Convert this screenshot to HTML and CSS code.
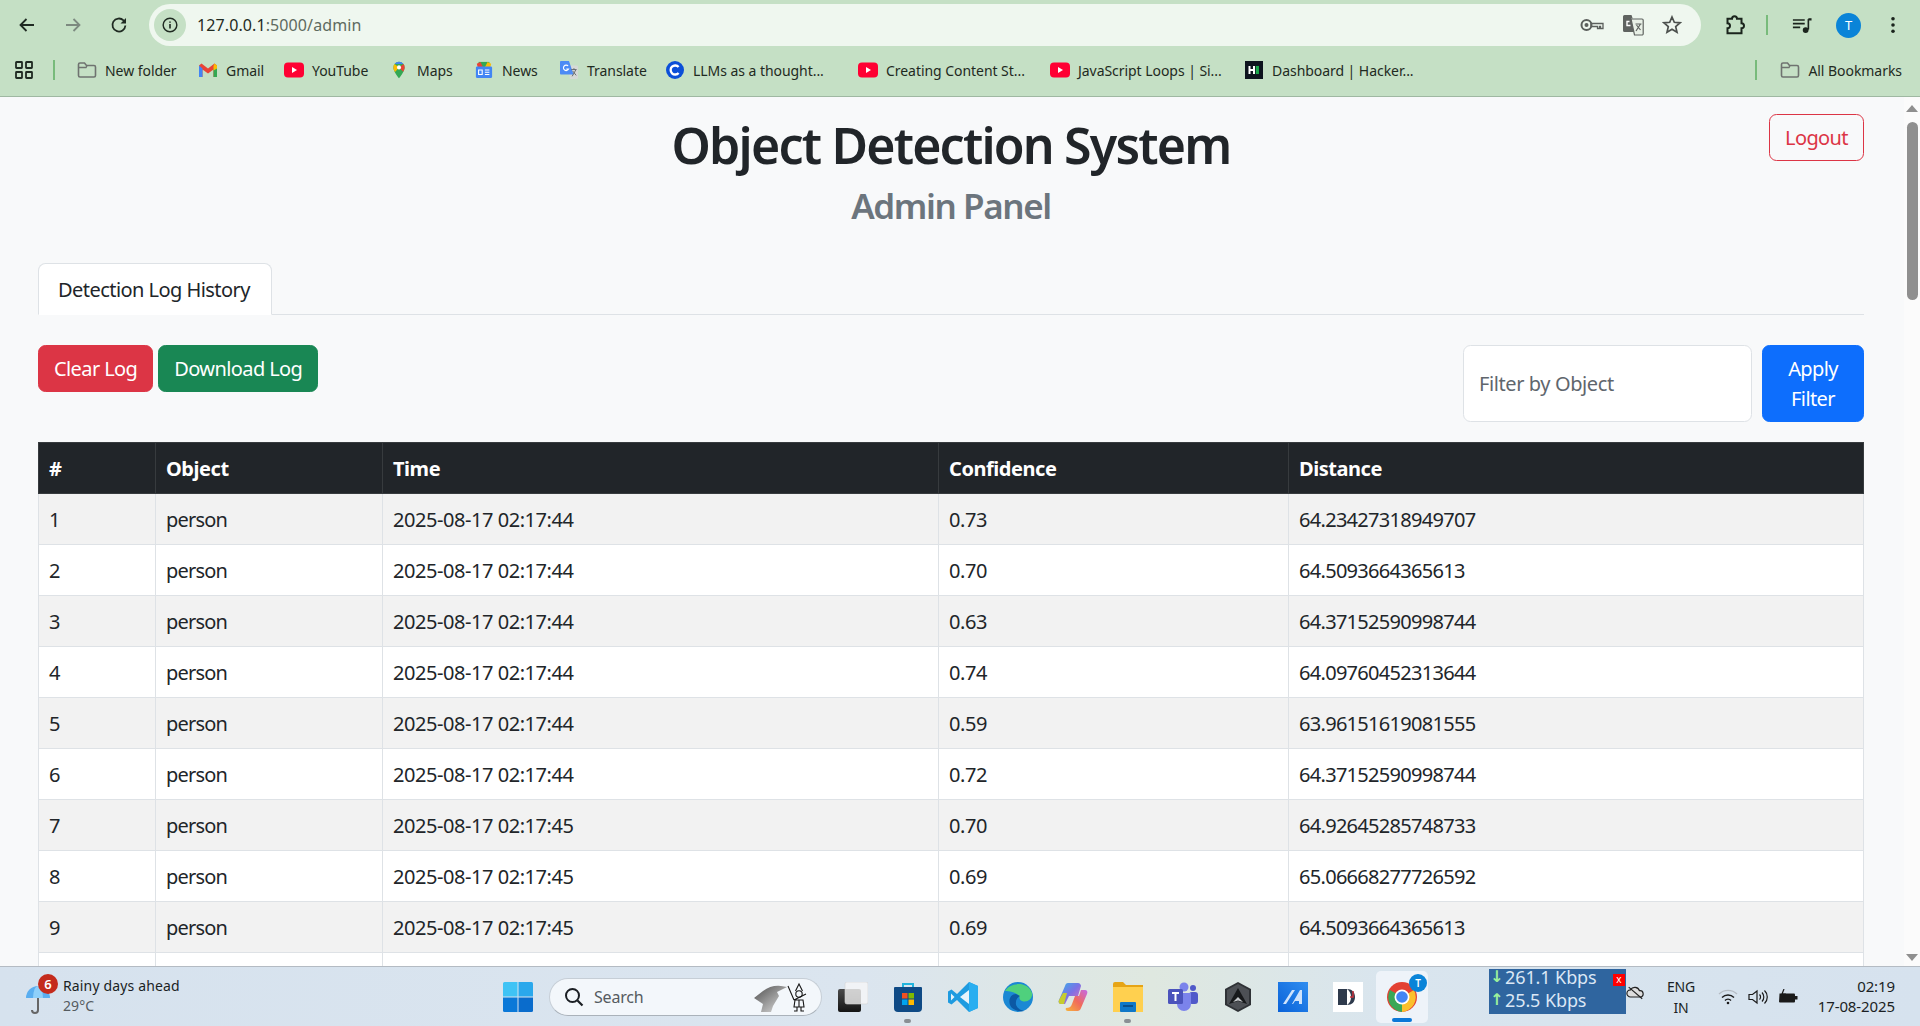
FILE: index.html
```html
<!DOCTYPE html>
<html lang="en">
<head>
<meta charset="utf-8">
<title>Object Detection System</title>
<link rel="stylesheet" href="styles.css">
</head>
<body>
<svg class="defs" width="0" height="0" aria-hidden="true">
  <symbol id="i-folder" viewBox="0 0 20 18"><path d="M1.500 3.500a1.500 1.500 0 0 1 1.500-1.500h4.500l2 2.500h7.500a1.500 1.500 0 0 1 1.500 1.500v8.500a1.500 1.500 0 0 1-1.500 1.500h-14a1.500 1.500 0 0 1-1.500-1.500z" fill="none" stroke="#6f7370" stroke-width="1.600"/><path d="M1.500 6.500h7.500l1-2" fill="none" stroke="#6f7370" stroke-width="1.400"/></symbol>
  <symbol id="i-yt" viewBox="0 0 20 16"><rect width="20" height="15" y=".5" rx="4" fill="#ff0033"/><path d="M8 5l5 3-5 3z" fill="#fff"/></symbol>
</svg>
<header class="browser">
  <div class="toolbar">
    <svg class="tb-btn" viewBox="0 0 20 20"><path d="M17 10H4M9.500 4L3.500 10l6 6" fill="none" stroke="#1f2a22" stroke-width="1.800"/></svg>
    <svg class="tb-btn" viewBox="0 0 20 20"><path d="M3 10h13M10.500 4l6 6-6 6" fill="none" stroke="#7d8a80" stroke-width="1.800"/></svg>
    <svg class="tb-btn" viewBox="0 0 20 20"><path d="M16.400 10.500a6.500 6.500 0 1 1-1.900-5.100L16.500 7.500" fill="none" stroke="#1f2a22" stroke-width="1.800"/><path d="M17 3v5.500h-5.500z" fill="#1f2a22"/></svg>
    <div class="omnibox">
      <span class="chip"><svg viewBox="0 0 20 20" width="18" height="18"><circle cx="10" cy="10" r="7.600" fill="none" stroke="#1f2a22" stroke-width="1.600"/><path d="M10 9v5M10 6v1.600" stroke="#1f2a22" stroke-width="1.800"/></svg></span>
      <span class="url"><span class="url-host">127.0.0.1</span>:5000/admin</span>
      <span class="omni-icons">
        <svg viewBox="0 0 24 14" width="24" height="14"><circle cx="6.500" cy="7" r="5" fill="none" stroke="#5b5f5c" stroke-width="2"/><circle cx="6.500" cy="7" r="2" fill="#5b5f5c"/><path d="M11 5.500h12v5h-2.500v-2h-1v2h-2v-2H11z" fill="none" stroke="#5b5f5c" stroke-width="1.300"/></svg>
        <svg viewBox="0 0 22 22" width="22" height="22"><path d="M1 2.500A1.500 1.500 0 0 1 2.500 1h7l1.200 3.500H9L13 18H2.500A1.500 1.500 0 0 1 1 16.500z" fill="#5f6360"/><path d="M9.500 5H20a1.200 1.200 0 0 1 1.200 1.200v13.600A1.200 1.200 0 0 1 20 21h-7.500L9 5z" fill="#e9f1e7" stroke="#5f6360" stroke-width="1.200"/><path d="M7.500 7.500H5v4h3.500" fill="none" stroke="#fff" stroke-width="1.400"/><path d="M14 17l4.500-7M14.500 11l4 5M13.500 10h6" fill="none" stroke="#5f6360" stroke-width="1.200"/></svg>
        <svg viewBox="0 0 20 20" width="20" height="20"><path d="M10 2l2.300 5.300 5.700.5-4.300 3.800 1.300 5.600L10 14.300 5 17.200l1.300-5.600L2 7.800l5.700-.5z" fill="none" stroke="#4c504d" stroke-width="1.700"/></svg>
      </span>
    </div>
    <svg class="ext" viewBox="0 0 22 22"><path d="M3 4.500h4.500a2.500 2.500 0 0 1 5 0H17V9a2.500 2.500 0 0 1 0 5v5H3v-5a2.500 2.500 0 0 0 0-5z" transform="translate(.5 .2)" fill="none" stroke="#1b241d" stroke-width="2"/></svg>
    <span class="sep sep-tool"></span>
    <svg class="media" viewBox="0 0 22 18"><path d="M1 3h13M1 7h13M1 11h8" stroke="#1b241d" stroke-width="1.800"/><path d="M18 2v11.500" stroke="#1b241d" stroke-width="1.800"/><path d="M18 1h3.500v2.500H18z" fill="#1b241d"/><circle cx="15" cy="14" r="3.200" fill="#1b241d"/></svg>
    <span class="avatar">T</span>
    <svg class="kebab" viewBox="0 0 6 20"><circle cx="3" cy="3" r="2" fill="#1b241d"/><circle cx="3" cy="10" r="2" fill="#1b241d"/><circle cx="3" cy="17" r="2" fill="#1b241d"/></svg>
  </div>
  <nav class="bookmarks">
    <svg class="apps" viewBox="0 0 18 18"><g fill="none" stroke="#1f2a22" stroke-width="1.800"><rect x="1" y="1" width="6" height="6" rx=".5"/><rect x="11" y="1" width="6" height="6" rx=".5"/><rect x="1" y="11" width="6" height="6" rx=".5"/><rect x="11" y="11" width="6" height="6" rx=".5"/></g></svg>
    <span class="sep"></span>
    <a class="bm"><svg class="bm-i" viewBox="0 0 20 18"><use href="#i-folder"/></svg>New folder</a>
    <a class="bm"><svg class="bm-i" viewBox="0 0 20 16"><path d="M1 3.500V15h3.500V7.500L10 11.500l5.500-4V15H19V3.500L16.500 1.500 10 6.500 3.500 1.500z" fill="#ea4335"/><path d="M1 3.500V15h3.500V6.500z" fill="#4285f4"/><path d="M19 3.500V15h-3.500V6.500z" fill="#34a853"/><path d="M16.500 1.500L19 3.500v3l-3.500 2V4z" fill="#fbbc04"/></svg>Gmail</a>
    <a class="bm"><svg class="bm-i" viewBox="0 0 20 16"><use href="#i-yt"/></svg>YouTube</a>
    <a class="bm"><svg class="bm-i" viewBox="0 0 20 24"><path d="M10 1a7.500 7.500 0 0 0-7.500 7.500C2.500 14 10 23 10 23s7.500-9 7.500-14.500A7.500 7.500 0 0 0 10 1z" fill="#34a853"/><path d="M4 4l12 0A7.500 7.500 0 0 0 10 1 7.500 7.500 0 0 0 4 4z" fill="#4285f4"/><path d="M2.500 8.500c0 2 1 4.200 2.200 6.200L10 8.500 4 4a7.500 7.500 0 0 0-1.500 4.500z" fill="#fbbc04"/><path d="M16 4l-6 4.500 5.500 5.800c1.200-2 2-4 2-5.800A7.500 7.500 0 0 0 16 4z" fill="#ea4335"/><circle cx="10" cy="8.500" r="2.700" fill="#fff"/></svg>Maps</a>
    <a class="bm"><svg class="bm-i" viewBox="0 0 20 20"><path d="M4 1h12v6H4z" fill="#34a853"/><path d="M2 3l4-2 3 6H3z" fill="#ea4335"/><path d="M18 3l-4-2-3 6h6z" fill="#fbbc04"/><rect x="1" y="6" width="18" height="13" rx="1.500" fill="#4285f4"/><path d="M4 10h4v5H4zM11 10h5M11 12.500h5M11 15h5" fill="none" stroke="#fff" stroke-width="1.200"/></svg>News</a>
    <a class="bm"><svg class="bm-i" viewBox="0 0 20 20"><path d="M9 5h9.500A1.500 1.500 0 0 1 20 6.500v12a1.500 1.500 0 0 1-1.500 1.500H11z" fill="#d6dad7"/><path d="M1 0h9l5 15H1a1 1 0 0 1-1-1V1a1 1 0 0 1 1-1z" fill="#4c8bf5"/><path d="M9 5.500A3 3 0 1 0 9.500 9H7" fill="none" stroke="#fff" stroke-width="1.300"/><path d="M12.500 9.500h6M15.500 8v1.500M13.500 17l4-7M14 11l4 5" fill="none" stroke="#5f6368" stroke-width="1"/></svg>Translate</a>
    <a class="bm"><svg class="bm-i" viewBox="0 0 20 20"><circle cx="10" cy="10" r="10" fill="#0b4fd8"/><path d="M14 6.800a5 5 0 1 0 0 6.400" fill="none" stroke="#fff" stroke-width="2.600"/></svg>LLMs as a thought...</a>
    <a class="bm"><svg class="bm-i" viewBox="0 0 20 16"><use href="#i-yt"/></svg>Creating Content St...</a>
    <a class="bm"><svg class="bm-i" viewBox="0 0 20 16"><use href="#i-yt"/></svg>JavaScript Loops | Si...</a>
    <a class="bm"><svg class="bm-i" viewBox="0 0 20 20"><rect width="20" height="20" fill="#0e141e"/><path d="M5 5.500v9M10 5.500v9M5 10h5" stroke="#fff" stroke-width="2.200"/><rect x="12" y="5.500" width="3.500" height="9" fill="#1ba94c"/></svg>Dashboard | Hacker...</a>
    <span class="bm-spacer"></span>
    <span class="sep"></span>
    <a class="bm"><svg class="bm-i" viewBox="0 0 20 18"><use href="#i-folder"/></svg>All Bookmarks</a>
  </nav>
</header>

<div class="viewport">
  <main class="page">
    <div class="title-row">
      <div class="titles">
        <h1 class="title">Object Detection System</h1>
        <h2 class="subtitle">Admin Panel</h2>
      </div>
      <a class="btn btn-logout">Logout</a>
    </div>
    <div class="tabs"><a class="tab">Detection Log History</a></div>
    <div class="actions">
      <div class="action-left">
        <a class="btn btn-danger">Clear Log</a>
        <a class="btn btn-success">Download Log</a>
      </div>
      <form class="filter">
        <input class="filter-input" type="text" placeholder="Filter by Object">
        <button class="btn btn-primary" type="button">Apply Filter</button>
      </form>
    </div>
    <table class="log">
      <thead>
        <tr><th class="c-num">#</th><th class="c-obj">Object</th><th class="c-time">Time</th><th class="c-conf">Confidence</th><th>Distance</th></tr>
      </thead>
      <tbody>
        <tr><td>1</td><td>person</td><td>2025-08-17 02:17:44</td><td>0.73</td><td>64.23427318949707</td></tr>
        <tr><td>2</td><td>person</td><td>2025-08-17 02:17:44</td><td>0.70</td><td>64.5093664365613</td></tr>
        <tr><td>3</td><td>person</td><td>2025-08-17 02:17:44</td><td>0.63</td><td>64.37152590998744</td></tr>
        <tr><td>4</td><td>person</td><td>2025-08-17 02:17:44</td><td>0.74</td><td>64.09760452313644</td></tr>
        <tr><td>5</td><td>person</td><td>2025-08-17 02:17:44</td><td>0.59</td><td>63.96151619081555</td></tr>
        <tr><td>6</td><td>person</td><td>2025-08-17 02:17:44</td><td>0.72</td><td>64.37152590998744</td></tr>
        <tr><td>7</td><td>person</td><td>2025-08-17 02:17:45</td><td>0.70</td><td>64.92645285748733</td></tr>
        <tr><td>8</td><td>person</td><td>2025-08-17 02:17:45</td><td>0.69</td><td>65.06668277726592</td></tr>
        <tr><td>9</td><td>person</td><td>2025-08-17 02:17:45</td><td>0.69</td><td>64.5093664365613</td></tr>
        <tr><td>&nbsp;</td><td></td><td></td><td></td><td></td></tr>
      </tbody>
    </table>
  </main>
  <div class="scrollbar">
    <span class="arrow-up"></span>
    <span class="thumb"></span>
    <span class="arrow-down"></span>
  </div>
</div>

<footer class="taskbar">
  <div class="weather">
    <svg class="umbrella" viewBox="0 0 24 34"><path d="M12 14v13a3 3 0 0 1-6 0" fill="none" stroke="#666" stroke-width="2"/><path d="M0 15a12 12 0 0 1 24 0z" fill="#5aaef0"/><path d="M7 15a5 12 0 0 1 10 0z" fill="#8fd0fa"/></svg>
    <span class="badge">6</span>
    <div class="weather-text"><span class="w-main">Rainy days ahead</span><span class="w-sub">29°C</span></div>
  </div>
  <div class="task-center">
    <span class="slot"><svg class="ti" viewBox="0 0 30 30"><path d="M0 1.500A1.500 1.500 0 0 1 1.500 0h13v14.500H0z" fill="#3fc3f5"/><path d="M15.500 0h13A1.500 1.500 0 0 1 30 1.500v13H15.500z" fill="#2aa8ec"/><path d="M0 15.500h14.500V30h-13A1.500 1.500 0 0 1 0 28.500z" fill="#0a78d8"/><path d="M15.500 15.500H30v13a1.500 1.500 0 0 1-1.500 1.500h-13z" fill="#0a6ccc"/></svg></span>
    <div class="searchbox">
      <svg class="s-ic" viewBox="0 0 20 20"><circle cx="8.500" cy="8.500" r="6.500" fill="none" stroke="#1b1f24" stroke-width="2"/><path d="M13.500 13.500l5 5" stroke="#1b1f24" stroke-width="2.200"/></svg>
      <span class="s-text">Search</span>
      <svg class="s-art" viewBox="0 0 60 30"><defs><linearGradient id="hand" x1="0" y1="0" x2="1" y2="1"><stop offset="0" stop-color="#4e4e4e"/><stop offset=".55" stop-color="#a0a0a0"/><stop offset="1" stop-color="#e2e2e2"/></linearGradient></defs><path d="M1 16L10 9Q18 3 28 4L34 5 24 10 26 14 20 24 18 30H8L10 22Z" fill="url(#hand)"/><g fill="none" stroke="#161616" stroke-width="1.100"><circle cx="46" cy="12" r="3.200"/><path d="M42.500 9L46 2l3.500 7M35 4l6 14M41 18l5-2.500 7-3.500M42 18h8l1 7H41zM46 18v7M44 25v4h-3M48 25v4h3"/></g></svg>
    </div>
    <span class="slot"><svg class="ti" viewBox="0 0 30 30"><defs><linearGradient id="tv" x1="0" y1="0" x2="0" y2="1"><stop offset="0" stop-color="#4a4a4a"/><stop offset="1" stop-color="#141414"/></linearGradient></defs><rect x="0" y="7" width="23" height="23" rx="2" fill="url(#tv)"/><rect x="7" y="0" width="23" height="22" rx="2" fill="#f7f7f7" fill-opacity=".78" stroke="#d5d5d5" stroke-width=".6"/></svg></span>
    <span class="slot slot-open"><svg class="ti" viewBox="0 0 30 30"><path d="M10 6V2h10v4" fill="none" stroke="#22b4dc" stroke-width="2"/><path d="M2 5h26a1 1 0 0 1 1 1v20a4 4 0 0 1-4 4H5a4 4 0 0 1-4-4V6a1 1 0 0 1 1-1z" fill="#0f4a85"/><rect x="9" y="11" width="5.500" height="5.500" fill="#f25022"/><rect x="15.500" y="11" width="5.500" height="5.500" fill="#7fba00"/><rect x="9" y="17.500" width="5.500" height="5.500" fill="#00a4ef"/><rect x="15.500" y="17.500" width="5.500" height="5.500" fill="#ffb900"/></svg></span>
    <span class="slot"><svg class="ti" viewBox="0 0 30 30"><path d="M21 0L9 12 3.500 7.500 0 9.500v11L3.500 22.500 9 18l12 12 9-4V4z" fill="#1e9be0"/><path d="M21 8L12 15l9 7z" fill="#e6f3fb"/><path d="M21 0l9 4v22l-9 4z" fill="#2aaef0"/><path d="M3 11.500L6.500 15 3 18.500z" fill="#e6f3fb"/></svg></span>
    <span class="slot"><svg class="ti" viewBox="0 0 30 30"><circle cx="15" cy="15" r="15" fill="#1b88d4"/><path d="M2 9C6 1 24-2 29 11c1 6-5 10-10 8-3-1-2-3-3-5-2-3-9-5-14-5z" fill="#4fd07d"/><path d="M13 12c-5 0-8 5-6 11 2 5 9 7 14 6-5-1-9-5-8-9 0-3 2-5 4-6z" fill="#0c59a4"/></svg></span>
    <span class="slot"><svg class="ti" viewBox="0 0 30 30"><defs><linearGradient id="cp1" x1="0" y1="0" x2="1" y2="1"><stop offset="0" stop-color="#34b2e8"/><stop offset=".5" stop-color="#7a72e6"/><stop offset="1" stop-color="#e86ab8"/></linearGradient><linearGradient id="cp2" x1="0" y1="1" x2="1" y2="0"><stop offset="0" stop-color="#f7b43a"/><stop offset=".5" stop-color="#f06a5c"/><stop offset="1" stop-color="#c46ae8"/></linearGradient></defs><path d="M10 1h10c2 0 3 2 3 3l-3 10h-9l-4 8H3c-2 0-3-2-2-4L7 4c.5-2 1.500-3 3-3z" fill="url(#cp1)"/><path d="M1 18l4-7h4l-3 11H3c-2 0-3-2-2-4z" fill="#c6cc2e"/><path d="M23 8h4c2 0 3 2 2 4l-6 14c-.5 2-2 3-3.500 3H10c-2 0-3-2-2-3 3 0 5-1 6-4l3-8h4z" fill="url(#cp2)"/></svg></span>
    <span class="slot slot-open"><svg class="ti" viewBox="0 0 30 30"><path d="M0 2a2 2 0 0 1 2-2h8l3 3h17v10H0z" fill="#e6a416"/><path d="M0 5h30v25H0z" fill="#ffd04f"/><rect x="7" y="20" width="16" height="10" rx="1" fill="#0f78c8"/><rect x="10" y="23" width="10" height="2" fill="#0a4f8a"/></svg></span>
    <span class="slot"><svg class="ti" viewBox="0 0 30 30"><circle cx="25" cy="6" r="3" fill="#5059c9"/><rect x="21" y="10" width="9" height="12" rx="3" fill="#5059c9"/><circle cx="16" cy="5" r="4.500" fill="#7b83eb"/><path d="M9 11h14v11a7 7 0 0 1-14 0z" fill="#7b83eb"/><rect x="0" y="7" width="15" height="15" rx="1.500" fill="#4b53bc"/><path d="M4 11h7M7.500 11v8" stroke="#fff" stroke-width="2"/></svg></span>
    <span class="slot"><svg class="ti" viewBox="0 0 30 30"><path d="M15 0l13 7v16l-13 7-13-7V7z" fill="#2f3236"/><path d="M15 2l11 6v14l-11 6-11-6V8z" fill="#4d5055"/><path d="M15 6L6 22l9-3 9 3z" fill="#17191b"/><path d="M15 15l-5 5 5-1.500 5 1.500z" fill="#c5c8cb"/></svg></span>
    <span class="slot"><svg class="ti" viewBox="0 0 30 30"><defs><linearGradient id="bl" x1="0" y1="1" x2="1" y2="0"><stop offset="0" stop-color="#0a62d8"/><stop offset="1" stop-color="#2f8df0"/></linearGradient></defs><rect width="30" height="30" fill="url(#bl)"/><path d="M5 22l9-14h3L8 22zM14 22l8-14h2v14h-3v-3h-4l-2 3z" fill="#cfe3fb"/></svg></span>
    <span class="slot"><svg class="ti" viewBox="0 0 30 30"><rect width="30" height="30" fill="#fff"/><path d="M5 7h9v16H5z" fill="#2e3a4c"/><path d="M14 7c5 0 8 3 8 8s-3 8-8 8c3-2 4-5 4-8s-1-6-4-8z" fill="#2e3a4c"/><path d="M20 9v6h-3" fill="none" stroke="#c8323c" stroke-width="1.500"/></svg></span>
    <span class="slot slot-active">
      <svg class="ti" viewBox="0 0 30 30"><circle cx="15" cy="15" r="15" fill="#e34133"/><path d="M15 15L27 8a15 15 0 0 1-12 22z" fill="#fbc02d"/><path d="M15 15L3 8a15 15 0 0 0 12 22z" fill="#3aa757"/><circle cx="15" cy="15" r="7.500" fill="#fff"/><circle cx="15" cy="15" r="5.800" fill="#4285f4"/></svg>
      <span class="chrome-badge">T</span>
    </span>
  </div>
  <div class="net">
    <div class="net-line"><span class="net-arrow">↓</span>261.1 Kbps</div>
    <div class="net-line"><span class="net-arrow">↑</span>25.5 Kbps</div>
    <span class="net-x">x</span>
  </div>
  <svg class="cloud" viewBox="0 0 20 16"><path d="M5 13a4 4 0 0 1 0-8 5.500 5.500 0 0 1 10 1 3.500 3.500 0 0 1 1 7z" fill="#ddd" stroke="#222" stroke-width="1.300"/><path d="M3 2l15 13" stroke="#222" stroke-width="1.300"/></svg>
  <div class="lang"><span>ENG</span><span>IN</span></div>
  <div class="tray-group">
    <svg class="tray" viewBox="0 0 20 16"><path d="M1 5a13 13 0 0 1 18 0" fill="none" stroke="#b5bcc4" stroke-width="1.400"/><path d="M4 8.500a8.500 8.500 0 0 1 12 0M7 11.500a4 4 0 0 1 6 0" fill="none" stroke="#1a1a1a" stroke-width="1.400"/><circle cx="10" cy="14" r="1.300" fill="#1a1a1a"/></svg>
    <svg class="tray" viewBox="0 0 20 16"><path d="M1 5.500h3.500L9 2v12l-4.500-3.500H1z" fill="none" stroke="#1a1a1a" stroke-width="1.200"/><path d="M11.500 5.500a3.500 3.500 0 0 1 0 5M14 3.500a6.500 6.500 0 0 1 0 9M16.500 1.500a9 9 0 0 1 0 13" fill="none" stroke="#1a1a1a" stroke-width="1.200"/></svg>
    <svg class="tray" viewBox="0 0 20 16"><path d="M1.500 4.500h14.500a1 1 0 0 1 1 1v7a1 1 0 0 1-1 1H2a1 1 0 0 1-1-1z" fill="#1a1a1a"/><rect x="17" y="7" width="2.500" height="3.500" fill="#1a1a1a"/><path d="M6 0L4 5h3L5 9" fill="none" stroke="#1a1a1a" stroke-width="1.200"/></svg>
  </div>
  <div class="clock"><span>02:19</span><span>17-08-2025</span></div>
</footer>
</body>
</html>
```
FILE: styles.css
```css
* { box-sizing: border-box; }
html, body { margin: 0; height: 100%; }
body {
  height: 1026px;
  overflow: hidden;
  display: flex;
  flex-direction: column;
  font-family: "Noto Sans", "Open Sans", sans-serif;
  color: #212529;
  background: #f8f9fa;
}
.defs { position: absolute; }

/* browser chrome */
.browser {
  height: 97px;
  flex: none;
  background: #c5e0c5;
  border-bottom: 1px solid #9fb8a2;
  padding-top: 4px;
}
.toolbar { height: 42px; display: flex; align-items: center; padding-left: 17px; }
.tb-btn { width: 20px; height: 20px; margin-right: 26px; flex: none; }
.omnibox {
  margin-left: -6px;
  width: 1552px;
  height: 42px;
  flex: none;
  border-radius: 21px;
  background: #eff7ef;
  display: flex;
  align-items: center;
  padding-left: 5px;
}
.chip {
  width: 32px; height: 32px;
  border-radius: 50%;
  background: #c5e0c5;
  display: flex; align-items: center; justify-content: center;
}
.url { margin-left: 11px; font-size: 16px; color: #5e6a60; letter-spacing: .1px; }
.url-host { color: #1f2a22; }
.omni-icons { margin-left: auto; margin-right: 19px; display: flex; align-items: center; gap: 18px; }
.ext { width: 22px; height: 22px; margin-left: 23px; flex: none; }
.sep { width: 2px; height: 20px; background: #78bb7b; flex: none; }
.sep-tool { margin-left: 20px; }
.media { width: 20px; height: 17px; margin-left: 24px; flex: none; }
.avatar {
  width: 25px; height: 25px; margin-left: 24px; flex: none;
  border-radius: 50%;
  background: #0a84d8; color: #fff;
  font-size: 13px; display: flex; align-items: center; justify-content: center;
}
.kebab { width: 6px; height: 18px; margin-left: 29px; flex: none; }

.bookmarks {
  height: 48px;
  display: grid;
  grid-template-columns: 38px 24px 121px 86px 105px 85px 85px 106px 193px 192px 194px 170px 1fr 25px auto;
  align-items: center;
  padding-left: 15px;
  padding-right: 18px;
}
.apps { width: 18px; height: 18px; }
.bm {
  display: flex; align-items: center; gap: 8px;
  font-size: 14px;
  letter-spacing: -.05px;
  color: #1f2a22;
  white-space: nowrap;
}
.bm-i { width: 20px; height: 18px; flex: none; }

/* viewport */
.viewport { flex: 1; min-height: 0; display: flex; overflow: hidden; }
.page { flex: 1; min-width: 0; padding: 16px 40px 0 38px; }
.scrollbar {
  width: 16px; flex: none;
  background: #fbfbfb;
  display: flex; flex-direction: column; align-items: center;
  padding-top: 8px;
}
.arrow-up, .arrow-down { width: 0; height: 0; border-left: 6px solid transparent; border-right: 6px solid transparent; }
.arrow-up { border-bottom: 7px solid #8f8f8f; }
.arrow-down { border-top: 7px solid #8f8f8f; margin-top: auto; margin-bottom: 5px; }
.thumb { width: 11px; height: 178px; margin-top: 10px; border-radius: 6px; background: #8f8f8f; }

.title-row { display: grid; grid-template-columns: 1fr; height: 150px; }
.titles, .btn-logout { grid-row: 1; grid-column: 1; }
.titles { text-align: center; }
.title { margin: 0; font-size: 50px; line-height: 60px; font-weight: 600; letter-spacing: -1.8px; padding-top: 2px; }
.subtitle { margin: 10px 0 0; font-size: 35px; line-height: 42px; font-weight: 600; color: #6c757d; letter-spacing: -1.4px; }

.btn {
  display: inline-block;
  font: inherit;
  font-size: 20px;
  line-height: 30px;
  padding: 7.5px 15px;
  border: 1px solid transparent;
  border-radius: 7.5px;
  text-align: center;
  letter-spacing: -.6px;
  color: #fff;
}
.btn-logout { justify-self: end; align-self: start; margin-top: 1px; height: 47px; color: #dc3545; border-color: #dc3545; }
.btn-danger { background: #dc3545; border-color: #dc3545; }
.btn-success { background: #198754; border-color: #198754; }
.btn-primary { background: #0d6efd; border-color: #0d6efd; width: 102px; }

.tabs { height: 52px; border-bottom: 1px solid #dee2e6; display: flex; }
.tab {
  width: 234px; height: 52px;
  padding: 11px 19px 9px;
  font-size: 20px; line-height: 30px;
  letter-spacing: -.55px;
  white-space: nowrap;
  background: #fff;
  border: 1px solid #dee2e6;
  border-bottom-color: #fff;
  border-radius: 7.5px 7.5px 0 0;
}

.actions { display: flex; justify-content: space-between; align-items: flex-start; margin: 30px 0 20px; }
.action-left { display: flex; gap: 5px; }
.filter { display: flex; gap: 10px; }
.filter-input {
  width: 289px; height: 77px;
  padding: 7.5px 15px;
  font: inherit; font-size: 20px;
  letter-spacing: -.4px;
  color: #212529;
  background: #fff;
  border: 1px solid #dee2e6;
  border-radius: 7.5px;
}
.filter-input::placeholder { color: #5f666d; opacity: 1; }

.log { width: 100%; border-collapse: collapse; table-layout: fixed; font-size: 20px; line-height: 30px; letter-spacing: -.45px; }
.log th, .log td { padding: 11px 10px 9px; text-align: left; border: 1px solid #dee2e6; height: 51px; }
.log th { background: #212529; color: #fff; font-weight: 700; border-color: #373b3e; }
.log td:nth-child(2) { letter-spacing: -.8px; }
.log td:last-child { letter-spacing: -.7px; }
.log tbody tr:nth-child(odd) td { background: #f2f2f2; }
.log tbody tr:nth-child(even) td { background: #fff; }
.c-num { width: 117px; }
.c-obj { width: 227px; }
.c-time { width: 556px; }
.c-conf { width: 350px; }

/* taskbar */
.taskbar {
  height: 60px; flex: none;
  display: flex; align-items: center;
  border-top: 1px solid #b4bbc3;
  background: linear-gradient(90deg, #d6e2ee 0%, #dbe5ef 45%, #dfe8e0 60%, #d9e5ee 72%, #d6e2ee 100%);
}
.weather { width: 490px; flex: none; display: flex; align-items: center; padding-left: 26px; position: relative; }
.umbrella { width: 24px; height: 34px; margin-top: 6px; }
.badge {
  position: absolute; left: 38px; top: -3px;
  width: 20px; height: 20px; border-radius: 50%;
  background: #c42b1c; color: #fff;
  font-size: 13px; font-weight: 600;
  display: flex; align-items: center; justify-content: center;
}
.weather-text { display: flex; flex-direction: column; margin-left: 13px; line-height: 20px; }
.w-main { font-size: 14px; letter-spacing: .15px; color: #1b1f24; margin-top: -1px; }
.w-sub { font-size: 14px; letter-spacing: .1px; color: #555b60; }
.task-center { display: flex; align-items: center; flex: none; }
.slot { width: 55px; height: 52px; display: flex; align-items: center; justify-content: center; position: relative; flex: none; }
.ti { width: 30px; height: 30px; }
.slot-open::after {
  content: ""; position: absolute; bottom: 0; left: 50%;
  width: 7px; height: 4px; margin-left: -3.5px; border-radius: 2px; background: #8a8f94;
}
.slot-active { background: #eef3f9; border-radius: 5px; width: 52px; margin-left: 1px; }
.slot-active::after {
  content: ""; position: absolute; bottom: 1px; left: 50%;
  width: 20px; height: 4px; margin-left: -10px; border-radius: 2px; background: #0a78d8;
}
.chrome-badge {
  position: absolute; right: 1px; top: 3px;
  width: 18px; height: 18px; border-radius: 50%;
  background: #0a84d8; color: #fff;
  font-size: 10px; font-weight: 600;
  display: flex; align-items: center; justify-content: center;
}
.searchbox {
  width: 273px; height: 38px;
  flex: none;
  margin: 0 3px 0 4px;
  display: flex; align-items: center;
  padding-left: 14px;
  border-radius: 19px;
  background: #f3f7fb;
  border: 1px solid #c6ced6;
  border-bottom-color: #aab2ba;
}
.s-ic { width: 20px; height: 20px; }
.s-text { margin-left: 10px; font-size: 16px; color: #555b60; letter-spacing: -.2px; }
.s-art { width: 60px; height: 30px; margin-left: auto; margin-right: 8px; }
.net {
  flex: none;
  align-self: flex-start;
  position: relative;
  margin: 2px 0 0 61px;
  width: 137px; height: 45px;
  padding-left: 1px;
  background: #2f659f;
  color: #dbe7f5;
  font-size: 18px;
  line-height: 22.5px;
}
.net-line { display: flex; white-space: nowrap; letter-spacing: -.1px; }
.net-line:first-child { margin-top: -3px; }
.net-arrow { width: 12px; margin-right: 3px; color: #9cf09c; font-family: "DejaVu Sans", sans-serif; font-size: 16px; font-weight: 700; }
.net-x {
  position: absolute; right: 1px; top: 5px;
  width: 12px; height: 12px;
  background: #ff0000; color: #fff;
  font-size: 10px; line-height: 11px; text-align: center;
}
.cloud { width: 18px; height: 15px; flex: none; margin-top: -8px; }
.lang {
  width: 50px; flex: none; margin-left: 12px;
  display: flex; flex-direction: column; align-items: center;
  font-size: 14px; line-height: 21px; letter-spacing: -.2px; color: #1b1f24;
}
.tray-group { display: flex; gap: 10px; margin-left: 12px; flex: none; }
.tray { width: 20px; height: 16px; }
.clock {
  margin-left: auto; margin-right: 25px; margin-top: -2px;
  display: flex; flex-direction: column; align-items: flex-end;
  font-size: 15px; line-height: 20px; letter-spacing: -.1px; color: #1b1f24;
}
```
